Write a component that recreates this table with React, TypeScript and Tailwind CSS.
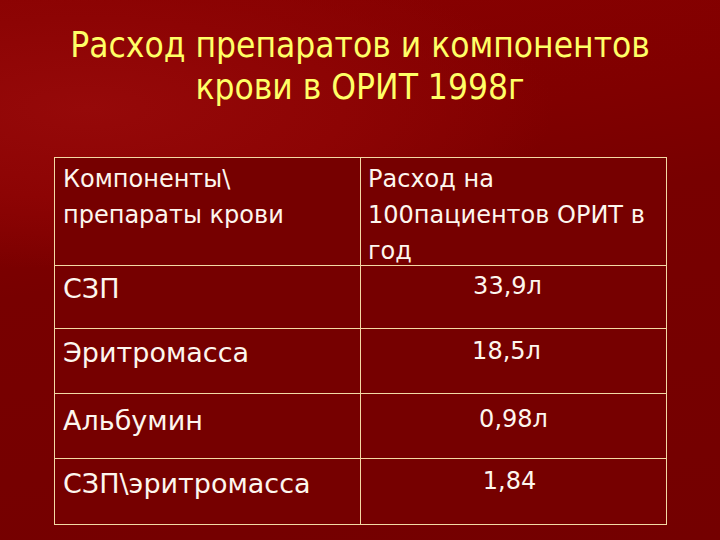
import React from "react";

const rows: { name: string; value: string; h: string; pl: string; pv: string; pr: string }[] = [
  { name: "СЗП", value: "33,9л", h: "h-[63px]", pl: "pt-[5px]", pv: "pt-[3px]", pr: "pr-[12px]" },
  { name: "Эритромасса", value: "18,5л", h: "h-[65px]", pl: "pt-[6px]", pv: "pt-[5px]", pr: "pr-[14px]" },
  { name: "Альбумин", value: "0,98л", h: "h-[65px]", pl: "pt-[9px]", pv: "pt-[8px]", pr: "pr-[0px]" },
  { name: "СЗП\\эритромасса", value: "1,84", h: "h-[65px]", pl: "pt-[7px]", pv: "pt-[5px]", pr: "pr-[8px]" },
];

export default function App() {
  return (
    <div className="w-[720px] h-[540px] overflow-hidden bg-[radial-gradient(ellipse_65%_30%_at_12%_20%,#960909_0%,#8d0404_55%,rgba(130,0,0,0)_100%),linear-gradient(170deg,#8a0101_0%,#800000_30%,#780000_45%,#740000_100%)] font-['DejaVu_Sans',sans-serif]">
      <h1 className="pt-[24px] text-center text-[35px] leading-[42px] text-[#ffff66] font-['DejaVu_Sans_Condensed','DejaVu_Sans',sans-serif] font-normal">
        Расход препаратов и компонентов
        <br />
        крови в ОРИТ 1998г
      </h1>
      <div className="mt-[49px] ml-[54px] w-[613px] border border-[#f3d9a4] bg-[#760000] text-[#fdf6ee] text-[24px] leading-[35px]">
        <div className="flex h-[108px] border-b border-[#f3d9a4] leading-[36px]">
          <div className="w-[306px] border-r border-[#f3d9a4] pl-[8px] pt-[3px]">
            Компоненты\
            <br />
            препараты крови
          </div>
          <div className="flex-1 pl-[7px] pt-[3px]">
            Расход на
            <br />
            100пациентов ОРИТ в
            <br />
            год
          </div>
        </div>
        {rows.map((r, i) => (
          <div
            key={r.name}
            className={`flex ${r.h} ${i < rows.length - 1 ? "border-b border-[#f3d9a4]" : ""}`}
          >
            <div className={`w-[306px] border-r border-[#f3d9a4] pl-[8px] text-[27px] ${r.pl}`}>
              {r.name}
            </div>
            <div className={`flex-1 text-center ${r.pv} ${r.pr}`}>{r.value}</div>
          </div>
        ))}
      </div>
    </div>
  );
}
